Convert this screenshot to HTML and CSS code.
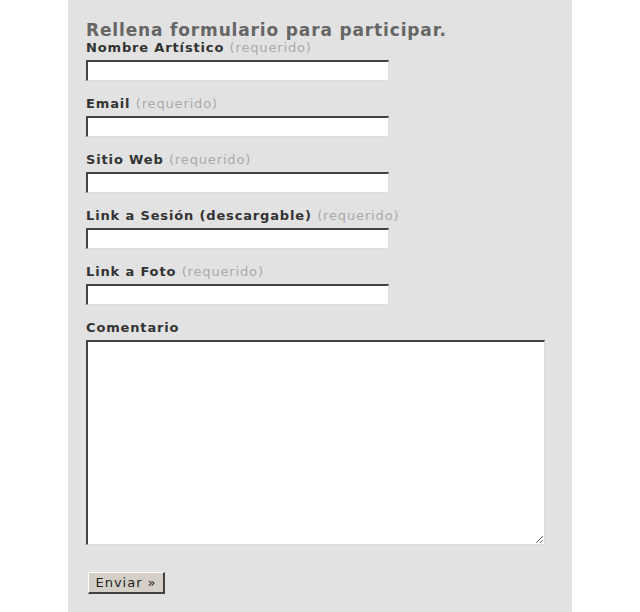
FILE: index.html
```html
<!DOCTYPE html>
<html lang="es">
<head>
    <meta charset="UTF-8">
    <meta name="viewport" content="width=device-width, initial-scale=1.0">
    <title>Participar</title>
    <link rel="stylesheet" href="styles.css">
</head>
<body>
    <div class="panel">
        <h3>Rellena formulario para participar.</h3>
        <form>
            <div class="field">
                <label for="nombre">Nombre Artístico <span>(requerido)</span></label>
                <input type="text" id="nombre">
            </div>
            <div class="field">
                <label for="email">Email <span>(requerido)</span></label>
                <input type="text" id="email">
            </div>
            <div class="field">
                <label for="web">Sitio Web <span>(requerido)</span></label>
                <input type="text" id="web">
            </div>
            <div class="field">
                <label for="sesion">Link a Sesión (descargable) <span>(requerido)</span></label>
                <input type="text" id="sesion">
            </div>
            <div class="field">
                <label for="foto">Link a Foto <span>(requerido)</span></label>
                <input type="text" id="foto">
            </div>
            <div class="field">
                <label for="comentario">Comentario</label>
                <textarea id="comentario"></textarea>
            </div>
            <button type="button">Enviar &raquo;</button>
        </form>
    </div>
</body>
</html>
```

FILE: styles.css
```css
html, body {
    height: 100%;
}

body {
    margin: 0;
    background: #fff;
    font-family: "DejaVu Sans", Verdana, sans-serif;
}

.panel {
    width: 504px;
    min-height: 100%;
    margin: 0 auto;
    padding: 20px 18px 0;
    box-sizing: border-box;
    background: #e2e2e2;
}

h3 {
    margin: 0;
    font-size: 17px;
    line-height: 20px;
    letter-spacing: 0.85px;
    color: #666;
}

.field {
    margin-bottom: 15px;
}

label {
    display: block;
    margin-bottom: 4px;
    font-size: 13px;
    line-height: 16px;
    font-weight: bold;
    letter-spacing: 0.85px;
    color: #333;
}

label span {
    font-weight: normal;
    color: #aaa;
}

input, textarea {
    display: block;
    box-sizing: border-box;
    margin: 0;
    padding: 2px 3px;
    border-width: 2px 1px 1px 2px;
    border-style: solid;
    border-color: #444 #dcdcdc #dcdcdc #444;
    background: #fff;
    font-family: inherit;
    font-size: 13px;
}

input {
    width: 303px;
    height: 21px;
}

textarea {
    width: 459px;
    height: 205px;
}

button {
    margin: 12px 0 0 2px;
    width: 77px;
    height: 22px;
    padding: 0;
    border-width: 1px 2px 2px 1px;
    border-style: solid;
    border-color: #fff #404040 #404040 #fff;
    background: #d4d0c8;
    font-family: inherit;
    font-size: 13px;
    letter-spacing: 1px;
    color: #222;
}
```
